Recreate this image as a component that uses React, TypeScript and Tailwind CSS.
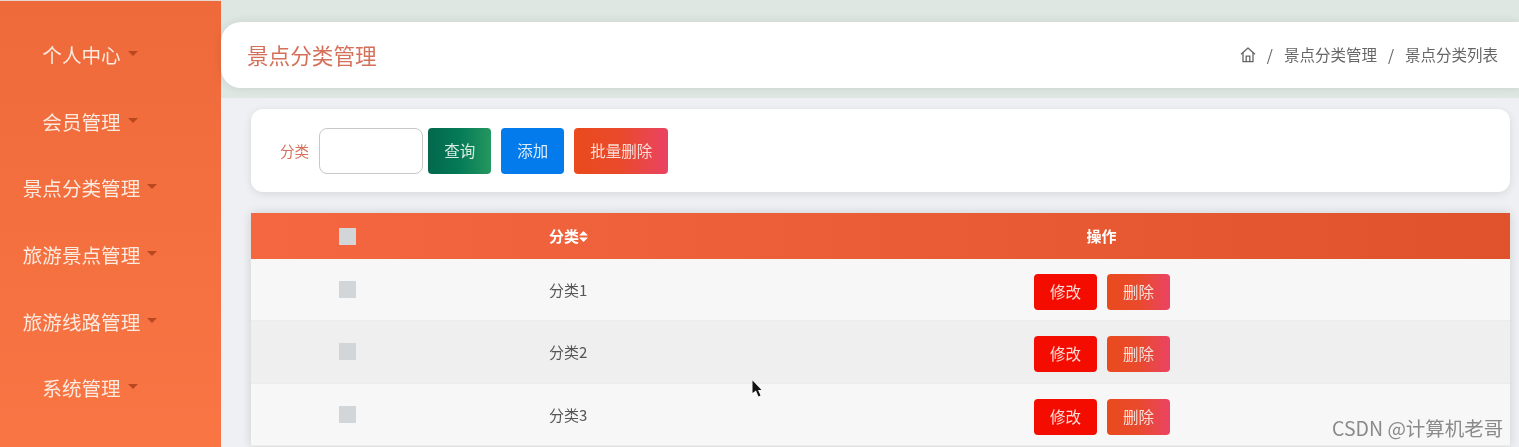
const menus = ["个人中心", "会员管理", "景点分类管理", "旅游景点管理", "旅游线路管理", "系统管理"];
const rows = [
  { name: "分类1", bg: "bg-[#f7f7f7]", h: "h-[62px]" },
  { name: "分类2", bg: "bg-[#efefef]", h: "h-[63px]" },
  { name: "分类3", bg: "bg-[#f7f7f7]", h: "h-[62px]" },
];

function HomeIcon() {
  return (
    <svg width="16" height="16" viewBox="0 0 16 16" fill="none" stroke="#666" strokeWidth="1.3" className="shrink-0">
      <path d="M1 7.2 8 1l7 6.2" strokeLinejoin="round" />
      <path d="M3 5.6v9h10v-9" />
      <path d="M6.2 14.6V9.2h3.6v5.4" />
    </svg>
  );
}

function ActionRow({ name, bg, h }: { name: string; bg: string; h: string }) {
  return (
    <div className={`grid grid-cols-[298px_143px_1fr] ${bg} ${h} border-b border-[#ececec]`}>
      <div className="pl-[88px] pt-[22px]">
        <div className="w-[17px] h-[17px] bg-[#d3d6d9]" />
      </div>
      <div className="pt-[20px] text-[15px] leading-[22px] text-[#555]">{name}</div>
      <div className="flex justify-center gap-[10px] pl-[2px] pt-[15px]">
        <button className="w-[63px] h-[36px] rounded bg-[#f50c00] text-[15.5px] text-[#f8dcd6]">修改</button>
        <button className="w-[63px] h-[36px] rounded bg-[linear-gradient(90deg,#ea4a1c,#e94a2c_50%,#ea4363)] text-[15.5px] text-[#f5e0da]">
          删除
        </button>
      </div>
    </div>
  );
}

export default function App() {
  return (
    <div className="relative flex h-[447px] overflow-hidden bg-[#eef0f3] blur-[0.4px] font-['Noto_Sans_CJK_SC','Liberation_Sans',sans-serif]">
      <aside className="w-[221px] shrink-0 pt-[37px] border-t border-[#e8d8ce] bg-gradient-to-b from-[#ef6a3a] to-[#fa7544]">
        {menus.map((m) => (
          <div key={m} className="flex h-[66.7px] justify-center pt-[2px] pr-[41px] text-[19.6px] leading-[30px] text-[#fbeadf]">
            <span>{m}</span>
            <span className="ml-[7px] mt-[11px] h-0 w-0 border-x-[5px] border-t-[5px] border-x-transparent border-t-[#b9471f]" />
          </div>
        ))}
      </aside>

      <main className="flex-1 min-w-0">
        <div className="bg-[#dfe7e3] pt-[22px] pb-[10px]">
          <header className="flex h-[66px] items-center justify-between rounded-l-[20px] bg-white pl-[26px] pr-[21px] shadow-[0_0_10px_rgba(0,0,0,0.1)]">
            <h1 className="text-[21.6px] text-[#d5705a]">景点分类管理</h1>
            <nav className="flex items-center text-[15.5px] text-[#666]">
              <HomeIcon />
              <span className="mx-[11px]">/</span>
              <span>景点分类管理</span>
              <span className="mx-[11px]">/</span>
              <span>景点分类列表</span>
            </nav>
          </header>
        </div>

        <div className="pl-[30px] pr-[9px] pt-[11px]">
          <section className="flex h-[83px] items-center rounded-xl bg-white pl-[29px] shadow-[0_2px_8px_rgba(0,0,0,0.1)]">
            <label className="text-[14.6px] text-[#d5705a]">分类</label>
            <input className="ml-[10px] h-[46px] w-[104px] rounded-lg border border-[#c8c8c8] bg-white" />
            <button className="ml-[5px] h-[46px] w-[63px] rounded bg-[linear-gradient(90deg,#04674d,#047a57_50%,#25975f)] text-[15.5px] text-[#d9ece2]">
              查询
            </button>
            <button className="ml-[10px] h-[46px] w-[63px] rounded bg-[#047bec] text-[15.5px] text-[#dcecfb]">添加</button>
            <button className="ml-[10px] h-[46px] w-[94px] rounded bg-[linear-gradient(90deg,#ea4a1c,#e94a2c_50%,#ea4363)] text-[15.5px] text-[#f8dcd6]">
              批量删除
            </button>
          </section>

          <section className="mt-[21px] shadow-[0_0_10px_rgba(0,0,0,0.14)]">
            <div className="grid h-[46px] grid-cols-[298px_143px_1fr] items-center bg-gradient-to-r from-[#f56741] to-[#df522b] text-[15px] font-bold text-white">
              <div className="pl-[88px]">
                <div className="h-[17px] w-[17px] bg-[#d3d6d9]" />
              </div>
              <div className="flex items-center">
                分类
                <svg width="9" height="11" viewBox="0 0 9 11" fill="#fff">
                  <path d="M4.5 0 9 4.6H0zM4.5 11 0 6.4h9z" />
                </svg>
              </div>
              <div className="pl-[1px] text-center">操作</div>
            </div>
            {rows.map((r) => (
              <ActionRow key={r.name} {...r} />
            ))}
          </section>
        </div>
      </main>

      {/* captured mouse pointer */}
      <svg className="absolute left-[752px] top-[380px]" width="10" height="17" viewBox="0 0 10 17" fill="#111">
        <path d="M0.5 0.5 9.5 10 6 10 8.5 15.5 6.5 16.5 4 10.5 0.5 13z" />
      </svg>
      <div className="absolute left-[1332px] top-[414px] text-[19.5px] leading-[28px] text-[#8a8a8a]">CSDN @计算机老哥</div>
    </div>
  );
}
